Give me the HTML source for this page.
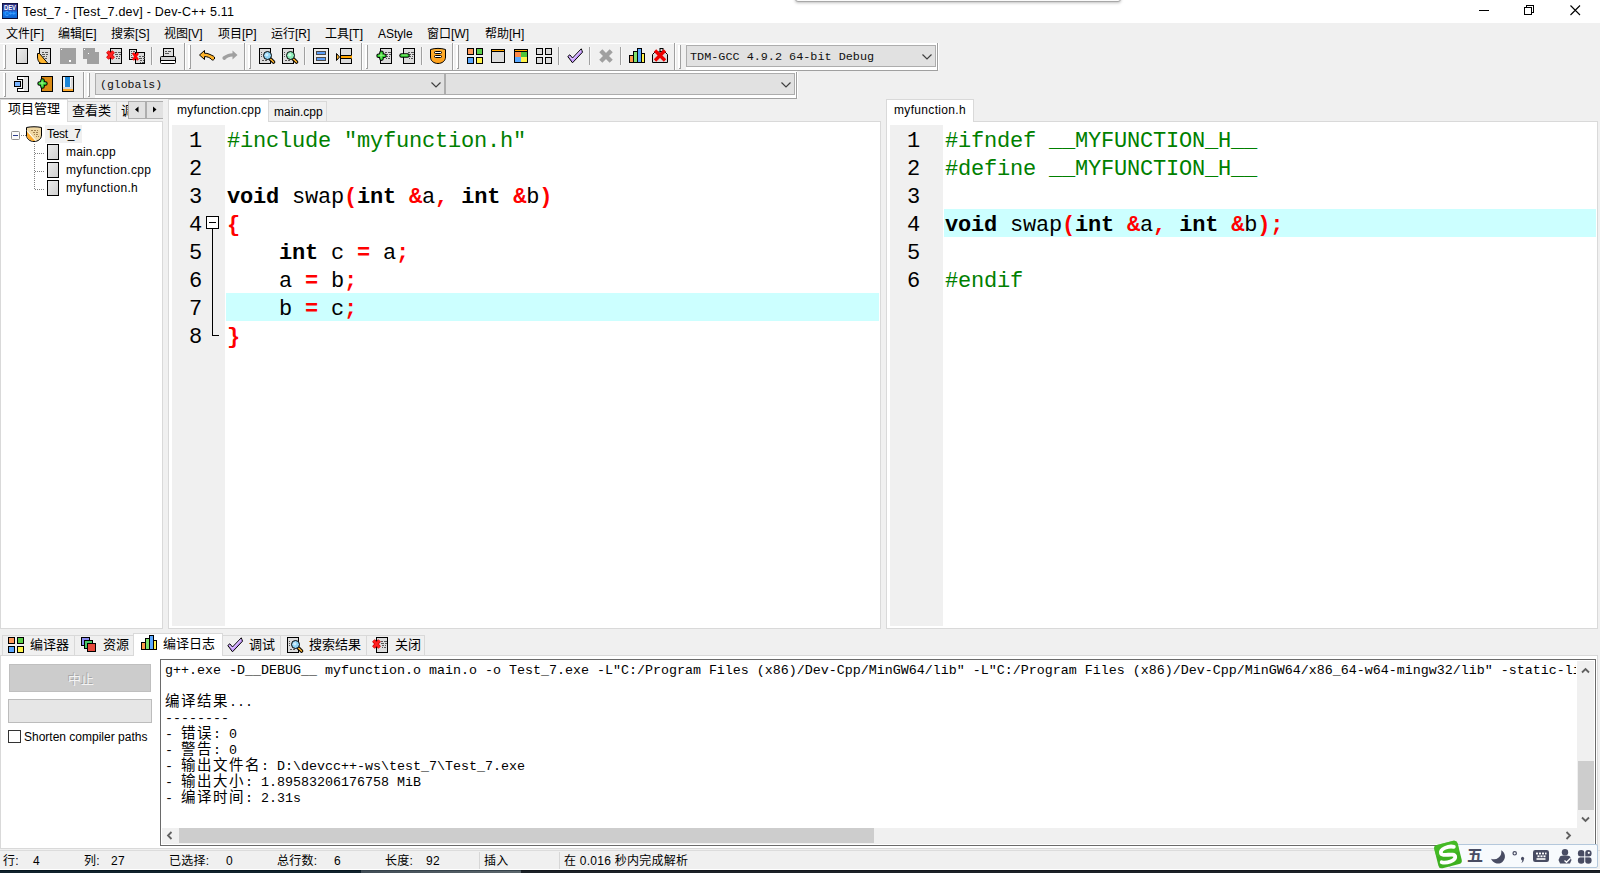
<!DOCTYPE html>
<html lang="zh-CN">
<head>
<meta charset="utf-8">
<title>Test_7 - [Test_7.dev] - Dev-C++ 5.11</title>
<style>
*{box-sizing:border-box;margin:0;padding:0}
html,body{width:1600px;height:873px;overflow:hidden;background:#f0f0f0}
body{position:relative;font-family:"Liberation Sans","Noto Sans CJK SC",sans-serif;font-size:12px;color:#000}
.a{position:absolute}
.t{position:absolute;white-space:pre;line-height:16px;height:16px;font-size:12px}
.m{font-family:"Liberation Mono","Noto Sans CJK SC",monospace}
svg{position:absolute;overflow:visible}
.band{position:absolute;border-right:1px solid #a0a0a0;border-bottom:1px solid #a0a0a0;border-top:1px solid #fff;border-left:1px solid #fff}
.grip{position:absolute;width:3px;border-left:2px solid #fff;border-right:1px solid #a0a0a0}
.grip:after{content:"";position:absolute;left:-1px;bottom:0;width:2px;height:1px;background:#a0a0a0}
.sep{position:absolute;width:2px;height:18px;border-left:1px solid #a0a0a0;border-right:1px solid #f8f8f8}
.combo{position:absolute;background:#e1e1e1;border:1px solid #adadad;height:22px}
.code{font-family:"Liberation Mono",monospace;font-size:22px;letter-spacing:-0.2px;line-height:28px;height:28px;white-space:pre;position:absolute}
.k{font-weight:bold}
.s{font-weight:bold;color:#f00}
.p{color:#008000}
.hl{position:absolute;background:#ccffff;height:28px}
.gut{position:absolute;background:#f0f0f0}
.tab{position:absolute;background:#f0f0f0;border:1px solid #d9d9d9;border-bottom:none}
.tabon{position:absolute;background:#fff;border:1px solid #d9d9d9;border-bottom:none}
.log{font-family:"Liberation Mono","Noto Sans CJK SC",monospace;font-size:13.33px;line-height:16px;height:16px;white-space:pre;position:absolute;color:#000}
.log i{font-style:normal;font-size:14.5px;letter-spacing:1.5px;display:inline-block;height:16px;line-height:16px;vertical-align:top;position:relative;top:-1px}
.st{position:absolute;white-space:pre;line-height:16px;height:16px;font-size:12px;top:853px;letter-spacing:.25px}
</style>
</head>
<body>
<div class="a" style="left:0;top:0;width:1600px;height:23px;background:#fff"></div>
<svg style="left:2px;top:3px" width="16" height="16" viewBox="0 0 16 16"><defs><linearGradient id="gapp" x1="0" y1="0" x2="0" y2="1"><stop offset="0" stop-color="#2b2a7a"/><stop offset=".5" stop-color="#2a52b8"/><stop offset=".62" stop-color="#0f7cf0"/><stop offset="1" stop-color="#1262d0"/></linearGradient></defs><rect x="0" y="0" width="16" height="16" fill="#0a0a30"/><rect x="0.700" y="0.700" width="14.300" height="14.300" fill="url(#gapp)"/><text x="8" y="7.300" text-anchor="middle" font-family="Liberation Sans,sans-serif" font-weight="bold" font-size="6.500" fill="#fff" textLength="12" lengthAdjust="spacingAndGlyphs">DEV</text><text x="8" y="13.300" text-anchor="middle" font-family="Liberation Sans,sans-serif" font-weight="bold" font-size="6.500" fill="#3f9cff" textLength="11" lengthAdjust="spacingAndGlyphs">C++</text></svg>
<span class="t" style="left:23px;top:4px;font-size:12.5px;letter-spacing:0.22px">Test_7 - [Test_7.dev] - Dev-C++ 5.11</span>
<svg style="left:1478px;top:4px" width="112" height="14" viewBox="0 0 112 14" fill="none" stroke="#000" stroke-width="1" shape-rendering="crispEdges"><path d="M1 6.5h10"/><path d="M46.5 3.5h7v7h-7z M48.5 3.5v-2h7v7h-2"/></svg>
<svg style="left:1570px;top:5px" width="11" height="11" viewBox="0 0 11 11" fill="none" stroke="#000" stroke-width="1.1"><path d="M0.5 0.5l9.5 9.5M10 0.5l-9.5 9.5"/></svg>
<div class="a" style="left:795px;top:-5px;width:326px;height:7px;background:#fafafa;border:1px solid #a8a8a8;border-radius:0 0 3px 3px;box-shadow:0 1px 3px rgba(0,0,0,.25)"></div>
<span class="t" style="left:6px;top:25.5px">文件[F]</span>
<span class="t" style="left:58px;top:25.5px">编辑[E]</span>
<span class="t" style="left:111px;top:25.5px">搜索[S]</span>
<span class="t" style="left:164px;top:25.5px">视图[V]</span>
<span class="t" style="left:218px;top:25.5px">项目[P]</span>
<span class="t" style="left:271px;top:25.5px">运行[R]</span>
<span class="t" style="left:325px;top:25.5px">工具[T]</span>
<span class="t" style="left:378px;top:25.5px">AStyle</span>
<span class="t" style="left:427px;top:25.5px">窗口[W]</span>
<span class="t" style="left:485px;top:25.5px">帮助[H]</span>
<div class="a" style="left:0;top:70px;width:938px;height:1px;background:#a0a0a0"></div>
<div class="a" style="left:0;top:43px;width:937px;height:1px;background:#fff"></div>
<div class="a" style="left:686px;top:43px;width:251px;height:27px;background:#fff"></div>
<div class="a" style="left:0;top:71px;width:797px;height:1px;background:#fff"></div>
<div class="a" style="left:184px;top:43px;width:1px;height:27px;background:#a0a0a0"></div>
<div class="a" style="left:185px;top:43px;width:1px;height:27px;background:#fff"></div>
<div class="grip" style="left:3px;top:45px;height:24px"></div>
<div class="a" style="left:244px;top:43px;width:1px;height:27px;background:#a0a0a0"></div>
<div class="a" style="left:245px;top:43px;width:1px;height:27px;background:#fff"></div>
<div class="grip" style="left:188px;top:45px;height:24px"></div>
<div class="a" style="left:361px;top:43px;width:1px;height:27px;background:#a0a0a0"></div>
<div class="a" style="left:362px;top:43px;width:1px;height:27px;background:#fff"></div>
<div class="grip" style="left:248px;top:45px;height:24px"></div>
<div class="a" style="left:452px;top:43px;width:1px;height:27px;background:#a0a0a0"></div>
<div class="a" style="left:453px;top:43px;width:1px;height:27px;background:#fff"></div>
<div class="grip" style="left:365px;top:45px;height:24px"></div>
<div class="a" style="left:674px;top:43px;width:1px;height:27px;background:#a0a0a0"></div>
<div class="a" style="left:675px;top:43px;width:1px;height:27px;background:#fff"></div>
<div class="grip" style="left:456px;top:45px;height:24px"></div>
<div class="a" style="left:937px;top:43px;width:1px;height:27px;background:#a0a0a0"></div>
<div class="a" style="left:938px;top:43px;width:1px;height:27px;background:#fff"></div>
<div class="grip" style="left:678px;top:45px;height:24px"></div>
<svg class="a" style="left:16px;top:48px" width="16" height="16" viewBox="0 0 16 16"><defs><linearGradient id="gpg" x1="0" y1="0" x2="1" y2="1"><stop offset="0" stop-color="#ececec"/><stop offset="1" stop-color="#cfcfcf"/></linearGradient></defs><rect x="0.5" y="0.5" width="11" height="15" fill="url(#gpg)" stroke="#000" shape-rendering="crispEdges"/></svg>
<svg class="a" style="left:37px;top:48px" width="16" height="16" viewBox="0 0 16 16"><rect x="2.5" y="0.5" width="11" height="15" fill="#dcdcdc" stroke="#000" shape-rendering="crispEdges"/><g fill="#555" shape-rendering="crispEdges"><rect x="5" y="4" width="2" height="1"/><rect x="8" y="4" width="3" height="1"/><rect x="5" y="6" width="3" height="1"/><rect x="9" y="6" width="2" height="1"/><rect x="6" y="8" width="2" height="1"/><rect x="9" y="8" width="1" height="1"/><rect x="6" y="10" width="1" height="1"/><rect x="8" y="10" width="2" height="1"/></g><path d="M0.5 5.5L2.5 5.5L11 15.5H5C2 15.5 0.5 12 0.5 9z" fill="#ffb52e" stroke="#000" stroke-width="1"/></svg>
<svg class="a" style="left:60px;top:48px" width="16" height="16" viewBox="0 0 16 16"><rect x="0" y="0" width="16" height="16" fill="#a0a0a0"/><rect x="1" y="1" width="1" height="1" fill="#fff"/><rect x="9" y="12" width="2" height="2" fill="#fff"/></svg>
<svg class="a" style="left:83px;top:48px" width="16" height="16" viewBox="0 0 16 16"><rect x="0" y="0" width="12" height="11" fill="#a0a0a0"/><rect x="4" y="4" width="12" height="12" fill="#a0a0a0"/><rect x="1" y="1" width="1" height="1" fill="#fff"/><rect x="5" y="5" width="1" height="1" fill="#fff"/></svg>
<svg class="a" style="left:106px;top:48px" width="16" height="16" viewBox="0 0 16 16"><rect x="4.5" y="0.5" width="11" height="15" fill="#dcdcdc" stroke="#000" shape-rendering="crispEdges"/><g fill="#555" shape-rendering="crispEdges"><rect x="9" y="4" width="2" height="1"/><rect x="12" y="4" width="3" height="1"/><rect x="9" y="6" width="3" height="1"/><rect x="13" y="6" width="2" height="1"/><rect x="10" y="8" width="2" height="1"/><rect x="13" y="8" width="1" height="1"/><rect x="10" y="10" width="1" height="1"/><rect x="12" y="10" width="2" height="1"/></g><path d="M1.500 3.500l6 7M7.500 3.500l-6 7" stroke="#c00000" stroke-width="3.600" fill="none"/><path d="M1.500 3.500l6 7M7.500 3.500l-6 7" stroke="#ff2020" stroke-width="2.400" fill="none"/></svg>
<svg class="a" style="left:129px;top:48px" width="16" height="16" viewBox="0 0 16 16"><rect x="0.5" y="1.5" width="7" height="10" fill="#dcdcdc" stroke="#000" shape-rendering="crispEdges"/><g fill="#555"><rect x="2" y="3" width="1" height="1"/><rect x="4" y="3" width="2" height="1"/><rect x="2" y="5" width="2" height="1"/><rect x="2" y="7" width="1" height="1"/><rect x="2" y="9" width="2" height="1"/></g><rect x="6.5" y="4.5" width="9" height="11" fill="#dcdcdc" stroke="#000" shape-rendering="crispEdges"/><g fill="#555" shape-rendering="crispEdges"><rect x="10" y="8" width="2" height="1"/><rect x="13" y="8" width="3" height="1"/><rect x="10" y="10" width="3" height="1"/><rect x="14" y="10" width="2" height="1"/><rect x="11" y="12" width="2" height="1"/><rect x="14" y="12" width="1" height="1"/><rect x="11" y="14" width="1" height="1"/><rect x="13" y="14" width="2" height="1"/></g><path d="M4 5l5 7M9 5l-5 7" stroke="#f00" stroke-width="2.400" fill="none"/></svg>
<div class="sep" style="left:151px;top:47px"></div>
<svg class="a" style="left:160px;top:48px" width="16" height="16" viewBox="0 0 16 16"><rect x="3.5" y="0.5" width="10" height="8" fill="#dcdcdc" stroke="#000" shape-rendering="crispEdges"/><rect x="5" y="3" width="2" height="1" fill="#555"/><rect x="8" y="3" width="3" height="1" fill="#555"/><rect x="5" y="5" width="4" height="1" fill="#555"/><rect x="0.5" y="8.5" width="15" height="7" rx="1" fill="#fff" stroke="#000"/><rect x="1" y="9" width="14" height="3" fill="#d0d0d0"/><rect x="1" y="12" width="14" height="1" fill="#000"/></svg>
<svg class="a" style="left:199px;top:48px" width="16" height="16" viewBox="0 0 16 16"><path d="M0.500 7L5.500 2.500V5.200C9 5.200 11 6.500 14.500 8.200C16 9 16 11 14.500 11.800C13.500 12.300 12.500 12 12.200 11C10.500 9.500 8.500 8.600 5.500 8.600V11.500z" fill="#ffb52e" stroke="#000" stroke-width="1" stroke-linejoin="round"/></svg>
<svg class="a" style="left:222px;top:48px" width="16" height="16" viewBox="0 0 16 16"><path d="M15.500 7L10.500 2.500V5.200C7 5.200 5 6.500 1.500 8.200C0 9 0 11 1.500 11.800C2.500 12.300 3.500 12 3.800 11C5.500 9.500 7.500 8.600 10.500 8.600V11.500z" fill="#a0a0a0"/></svg>
<svg class="a" style="left:259px;top:48px" width="16" height="16" viewBox="0 0 16 16"><rect x="0.5" y="0.5" width="11" height="15" fill="#dcdcdc" stroke="#000" shape-rendering="crispEdges"/><g fill="#555" shape-rendering="crispEdges"><rect x="2" y="4" width="1" height="1"/><rect x="2" y="6" width="1" height="1"/><rect x="2" y="8" width="1" height="1"/><rect x="3" y="12" width="2" height="1"/><rect x="6" y="12" width="2" height="1"/></g><path d="M11.500 11l3 3" stroke="#000" stroke-width="3.600" stroke-linecap="round"/><path d="M11.500 11l3 3" stroke="#ffb52e" stroke-width="1.600" stroke-linecap="round"/><circle cx="8.500" cy="7.500" r="4" fill="#8fd4f5" stroke="#000" stroke-width="1"/><circle cx="7.800" cy="6.800" r="1.600" fill="#fff" opacity=".6"/></svg>
<svg class="a" style="left:282px;top:48px" width="16" height="16" viewBox="0 0 16 16"><rect x="0.5" y="0.5" width="11" height="15" fill="#dcdcdc" stroke="#000" shape-rendering="crispEdges"/><g fill="#555" shape-rendering="crispEdges"><rect x="2" y="4" width="1" height="1"/><rect x="2" y="6" width="1" height="1"/><rect x="2" y="8" width="1" height="1"/><rect x="3" y="12" width="2" height="1"/><rect x="6" y="12" width="2" height="1"/></g><path d="M11.500 11l3 3" stroke="#000" stroke-width="3.600" stroke-linecap="round"/><path d="M11.500 11l3 3" stroke="#ffb52e" stroke-width="1.600" stroke-linecap="round"/><circle cx="8.500" cy="7.500" r="4" fill="#8cecb8" stroke="#000" stroke-width="1"/><circle cx="7.800" cy="6.800" r="1.600" fill="#fff" opacity=".6"/></svg>
<div class="sep" style="left:304px;top:47px"></div>
<svg class="a" style="left:313px;top:48px" width="16" height="16" viewBox="0 0 16 16"><rect x="0.5" y="0.5" width="15" height="15" fill="#ececec" stroke="#000" shape-rendering="crispEdges"/><rect x="3.5" y="3.5" width="9" height="3" fill="#5a9cf5" stroke="#4a4a4a" shape-rendering="crispEdges"/><rect x="3.5" y="9.5" width="9" height="3" fill="#5a9cf5" stroke="#4a4a4a" shape-rendering="crispEdges"/></svg>
<svg class="a" style="left:336px;top:48px" width="16" height="16" viewBox="0 0 16 16"><rect x="4.5" y="0.5" width="11" height="15" fill="#dcdcdc" stroke="#000" shape-rendering="crispEdges"/><rect x="5" y="7.5" width="11" height="3" fill="#ffa500" stroke="#000" stroke-width="0" /><rect x="5" y="7" width="10" height="1" fill="#000"/><rect x="5" y="10" width="10" height="1" fill="#000"/><rect x="5" y="8" width="10" height="2" fill="#ffa500"/><path d="M0.5 5.5l3 3.5l-3 3.5z" fill="#ffb52e" stroke="#000" stroke-width="1"/></svg>
<svg class="a" style="left:376px;top:48px" width="16" height="16" viewBox="0 0 16 16"><rect x="4.5" y="0.5" width="11" height="15" fill="#dcdcdc" stroke="#000" shape-rendering="crispEdges"/><g fill="#555" shape-rendering="crispEdges"><rect x="9" y="4" width="2" height="1"/><rect x="12" y="4" width="3" height="1"/><rect x="9" y="6" width="3" height="1"/><rect x="13" y="6" width="2" height="1"/><rect x="10" y="8" width="2" height="1"/><rect x="13" y="8" width="1" height="1"/><rect x="10" y="10" width="1" height="1"/><rect x="12" y="10" width="2" height="1"/></g><path d="M2.600 7.700h5.800M5.500 4.800v5.800" stroke="#000" stroke-width="4.600" stroke-linecap="round"/><path d="M2.600 7.700h5.800M5.500 4.800v5.800" stroke="#2fd42f" stroke-width="2.600" stroke-linecap="round"/><path d="M3 7.200h5M5 5.500v4.500" stroke="#b6ff9c" stroke-width="0.800" stroke-linecap="round"/></svg>
<svg class="a" style="left:399px;top:48px" width="16" height="16" viewBox="0 0 16 16"><rect x="4.5" y="0.5" width="11" height="15" fill="#dcdcdc" stroke="#000" shape-rendering="crispEdges"/><g fill="#555" shape-rendering="crispEdges"><rect x="9" y="4" width="2" height="1"/><rect x="12" y="4" width="3" height="1"/><rect x="9" y="6" width="3" height="1"/><rect x="13" y="6" width="2" height="1"/><rect x="10" y="8" width="2" height="1"/><rect x="13" y="8" width="1" height="1"/><rect x="10" y="10" width="1" height="1"/><rect x="12" y="10" width="2" height="1"/></g><path d="M2.600 7.500h5.800" stroke="#000" stroke-width="4.600" stroke-linecap="round"/><path d="M2.600 7.500h5.800" stroke="#2fd42f" stroke-width="2.600" stroke-linecap="round"/><path d="M3 7h5" stroke="#b6ff9c" stroke-width="0.800" stroke-linecap="round"/></svg>
<div class="sep" style="left:421px;top:47px"></div>
<svg class="a" style="left:430px;top:48px" width="16" height="16" viewBox="0 0 16 16"><defs><linearGradient id="gor" x1="0" y1="0" x2="0" y2="1"><stop offset="0" stop-color="#ffb030"/><stop offset="1" stop-color="#ffa01a"/></linearGradient></defs><path d="M0.5 1.5C5 0 11 0 15.5 1.5V9C15.5 13 12 15.5 8 15.5C4 15.5 0.5 13 0.5 9z" fill="url(#gor)" stroke="#000" stroke-width="1"/><rect x="4.5" y="3.5" width="7" height="2" rx="1" fill="#fff" stroke="#000" stroke-width="1"/><rect x="4.5" y="7.5" width="7" height="2" rx="1" fill="#fff" stroke="#000" stroke-width="1"/></svg>
<svg class="a" style="left:467px;top:48px" width="16" height="16" viewBox="0 0 16 16"><rect x="0.5" y="0.5" width="6" height="6" fill="#ff9a5a" stroke="#000" shape-rendering="crispEdges"/><rect x="9.5" y="0.5" width="6" height="6" fill="#5ccf4a" stroke="#000" shape-rendering="crispEdges"/><rect x="0.5" y="9.5" width="6" height="6" fill="#5aa8ff" stroke="#000" shape-rendering="crispEdges"/><rect x="9.5" y="9.5" width="6" height="6" fill="#fff34a" stroke="#000" shape-rendering="crispEdges"/></svg>
<svg class="a" style="left:490px;top:48px" width="16" height="16" viewBox="0 0 16 16"><rect x="1.5" y="1.5" width="13" height="13" fill="#dcdcdc" stroke="#000" shape-rendering="crispEdges"/><rect x="2" y="2" width="12" height="1" fill="#ffa500"/><rect x="2" y="3" width="12" height="1" fill="#000"/></svg>
<svg class="a" style="left:513px;top:48px" width="16" height="16" viewBox="0 0 16 16"><rect x="1.5" y="1.5" width="13" height="13" fill="#dcdcdc" stroke="#000" shape-rendering="crispEdges"/><rect x="2" y="2" width="12" height="1" fill="#ffa500"/><rect x="2" y="3" width="12" height="1" fill="#000"/><rect x="2" y="4" width="6" height="5" fill="#ff8a4a"/><rect x="8" y="4" width="6" height="5" fill="#4cc43a"/><rect x="2" y="9" width="6" height="5" fill="#5aa8ff"/><rect x="8" y="9" width="6" height="5" fill="#fff34a"/></svg>
<svg class="a" style="left:536px;top:48px" width="16" height="16" viewBox="0 0 16 16"><rect x="0.5" y="0.5" width="6" height="6" fill="#dcdcdc" stroke="#000" shape-rendering="crispEdges"/><rect x="9.5" y="0.5" width="6" height="6" fill="#dcdcdc" stroke="#000" shape-rendering="crispEdges"/><rect x="0.5" y="9.5" width="6" height="6" fill="#dcdcdc" stroke="#000" shape-rendering="crispEdges"/><rect x="9.5" y="9.5" width="6" height="6" fill="#dcdcdc" stroke="#000" shape-rendering="crispEdges"/></svg>
<div class="sep" style="left:558px;top:47px"></div>
<svg class="a" style="left:567px;top:48px" width="16" height="16" viewBox="0 0 16 16"><path d="M0.800 8.500L2.800 6.800L5.500 10L14.300 0.800L15.500 4.200L5.500 14.800z" fill="#c79bff" stroke="#000" stroke-width="1" stroke-linejoin="round"/><path d="M2.500 8.300L5.500 11.500L14 2.500" stroke="#e6d2ff" stroke-width="1" fill="none"/></svg>
<div class="sep" style="left:589px;top:47px"></div>
<svg class="a" style="left:598px;top:48px" width="16" height="16" viewBox="0 0 16 16"><path d="M2.800 3.800l10.400 10.400M13.200 3.800L2.800 14.200" stroke="#a0a0a0" stroke-width="4.400" fill="none" transform="translate(0 -1)"/></svg>
<div class="sep" style="left:620px;top:47px"></div>
<svg class="a" style="left:629px;top:48px" width="16" height="16" viewBox="0 0 16 16"><g stroke="#000" shape-rendering="crispEdges"><rect x="0.5" y="7.5" width="4" height="7" fill="#ff9a4a"/><rect x="4.5" y="3.5" width="4" height="11" fill="#7fe06a"/><rect x="8.5" y="0.5" width="4" height="14" fill="#5aa8ff"/><rect x="12.5" y="5.5" width="3" height="9" fill="#fff34a"/></g><rect x="0" y="14" width="16" height="1" fill="#000"/></svg>
<svg class="a" style="left:652px;top:48px" width="16" height="16" viewBox="0 0 16 16"><path d="M0.5 6.5L3 4h10l2.5 2.5v8h-15z" fill="#dcdcdc" stroke="#000" stroke-width="1"/><rect x="8" y="0.500" width="3" height="3" fill="#dcdcdc" stroke="#000"/><path d="M3 2.5l10 10M13 2.5l-10 10" stroke="#e00" stroke-width="3.4" fill="none"/></svg>
<div class="combo" style="left:686px;top:45px;width:250px"></div>
<span class="t m" style="left:690px;top:49px;font-size:11.8px;color:#111">TDM-GCC 4.9.2 64-bit Debug</span>
<svg style="left:922px;top:54px" width="10" height="6" viewBox="0 0 10 6" fill="none" stroke="#404040" stroke-width="1.2"><path d="M0.5 0.5l4.5 4.5l4.5-4.5"/></svg>
<div class="a" style="left:0;top:98px;width:797px;height:1px;background:#a0a0a0"></div>
<div class="a" style="left:83px;top:72px;width:1px;height:26px;background:#a0a0a0"></div>
<div class="a" style="left:84px;top:72px;width:1px;height:26px;background:#fff"></div>
<div class="grip" style="left:3px;top:73px;height:24px"></div>
<div class="a" style="left:796px;top:72px;width:1px;height:26px;background:#a0a0a0"></div>
<div class="a" style="left:797px;top:72px;width:1px;height:26px;background:#fff"></div>
<div class="grip" style="left:87px;top:73px;height:24px"></div>
<svg class="a" style="left:14px;top:76px" width="16" height="16" viewBox="0 0 16 16"><path d="M3.500 0.500H14.500V15.500H3.500V12.500H8.500V3.500H3.500z" fill="#e4e4e4" stroke="#000" stroke-width="1" shape-rendering="crispEdges"/><rect x="4" y="1" width="6" height="2" fill="#fff"/><rect x="4" y="13" width="6" height="2" fill="#fff"/><rect x="0.500" y="5.500" width="6" height="5" fill="#7ab4ff" stroke="#000" shape-rendering="crispEdges"/></svg>
<svg class="a" style="left:37px;top:76px" width="16" height="16" viewBox="0 0 16 16"><rect x="4.500" y="0.500" width="11" height="15" fill="#d98a14" stroke="#000" shape-rendering="crispEdges"/><path d="M2.600 7.500h5.800M5.500 4.600v5.800" stroke="#000" stroke-width="4.600" stroke-linecap="round"/><path d="M2.600 7.500h5.800M5.500 4.600v5.800" stroke="#2fd42f" stroke-width="2.600" stroke-linecap="round"/><path d="M3 7h5M5 5.300v4.500" stroke="#b6ff9c" stroke-width="0.800" stroke-linecap="round"/></svg>
<svg class="a" style="left:60px;top:76px" width="16" height="16" viewBox="0 0 16 16"><rect x="2.500" y="0.500" width="11" height="15" fill="#f4f4f4" stroke="#000" shape-rendering="crispEdges"/><rect x="3" y="13" width="10" height="2" fill="#ffa826"/><rect x="3" y="11" width="10" height="2" fill="#d8d8d8"/><rect x="11" y="2" width="2" height="10" fill="#d8d8d8"/><rect x="5" y="1" width="5" height="10" fill="#1c86d8"/></svg>
<div class="a" style="left:95px;top:71px;width:701px;height:27px;background:#fff"></div>
<div class="combo" style="left:95px;top:73px;width:350px"></div>
<div class="combo" style="left:445px;top:73px;width:350px"></div>
<span class="t m" style="left:100px;top:77px;font-size:11.5px;color:#111">(globals)</span>
<svg style="left:431px;top:82px" width="10" height="6" viewBox="0 0 10 6" fill="none" stroke="#404040" stroke-width="1.2"><path d="M0.5 0.5l4.5 4.5l4.5-4.5"/></svg>
<svg style="left:781px;top:82px" width="10" height="6" viewBox="0 0 10 6" fill="none" stroke="#404040" stroke-width="1.2"><path d="M0.5 0.5l4.5 4.5l4.5-4.5"/></svg>
<div class="a" style="left:0;top:121px;width:163px;height:508px;background:#fff;border:1px solid #d9d9d9"></div>
<div class="tabon" style="left:0;top:99px;width:68px;height:23px"></div>
<div class="tab" style="left:67px;top:101px;width:50px;height:20px"></div>
<div class="tab" style="left:116px;top:101px;width:20px;height:20px;border-right:none"></div>
<span class="t" style="left:8px;top:101px;font-size:13px">项目管理</span>
<span class="t" style="left:72px;top:103px;font-size:13px">查看类</span>
<span class="t" style="left:121px;top:103px;font-size:13px;width:7px;overflow:hidden">调试</span>
<div class="a" style="left:128px;top:101px;width:18px;height:18px;background:#e1e1e1;border:1px solid #adadad"></div>
<svg style="left:128px;top:101px" width="18" height="18" viewBox="0 0 18 18"><path d="M10.5 5.5v6l-3.5-3z" fill="#000"/></svg>
<div class="a" style="left:146px;top:101px;width:18px;height:18px;background:#e1e1e1;border:1px solid #adadad"></div>
<svg style="left:146px;top:101px" width="18" height="18" viewBox="0 0 18 18"><path d="M7 5.5v6l3.5-3z" fill="#000"/></svg>
<div class="a" style="left:45px;top:125px;width:37px;height:18px;background:#f0f0f0"></div>
<svg style="left:0px;top:122px" width="163" height="80" viewBox="0 0 163 80" shape-rendering="crispEdges"><g stroke="#808080" stroke-dasharray="1 1" fill="none"><path d="M21 13.5h6 M34.5 22v46 M35 31.5h10 M35 49.5h10 M35 67.5h10"/></g><rect x="11.5" y="9.5" width="8" height="8" rx="1" fill="#fbfbfb" stroke="#919191" shape-rendering="auto"/><path d="M13 13.5h5" stroke="#2b3c8c"/></svg>
<svg class="a" style="left:26px;top:126px" width="16" height="16" viewBox="0 0 16 16"><path d="M0.500 1.500C5 0.500 11 0.500 15.500 1.500V9C15.500 13 12 15.500 8 15.500C4 15.500 0.500 13 0.500 9z" fill="#f0d8a4" stroke="#000" stroke-width="1"/><path d="M1 6L9 15C4 15 1 12.500 1 9z" fill="#ffa826"/><path d="M1 4.500L10 14.800" stroke="#fff" stroke-width="1" fill="none"/><g fill="#a08050"><rect x="5" y="4" width="2" height="1"/><rect x="8" y="4" width="2" height="1"/><rect x="11" y="4" width="1" height="1"/><rect x="7" y="6" width="2" height="1"/><rect x="10" y="6" width="2" height="1"/><rect x="8" y="8" width="1" height="1"/><rect x="10" y="8" width="2" height="1"/><rect x="10" y="10" width="1" height="1"/><rect x="12" y="10" width="1" height="1"/></g></svg>
<svg class="a" style="left:47px;top:144px" width="16" height="16" viewBox="0 0 16 16"><defs><linearGradient id="gpg" x1="0" y1="0" x2="1" y2="1"><stop offset="0" stop-color="#ececec"/><stop offset="1" stop-color="#cfcfcf"/></linearGradient></defs><rect x="0.5" y="0.5" width="11" height="15" fill="url(#gpg)" stroke="#000" shape-rendering="crispEdges"/></svg>
<span class="t" style="left:66px;top:144px;letter-spacing:0.13px">main.cpp</span>
<svg class="a" style="left:47px;top:162px" width="16" height="16" viewBox="0 0 16 16"><defs><linearGradient id="gpg" x1="0" y1="0" x2="1" y2="1"><stop offset="0" stop-color="#ececec"/><stop offset="1" stop-color="#cfcfcf"/></linearGradient></defs><rect x="0.5" y="0.5" width="11" height="15" fill="url(#gpg)" stroke="#000" shape-rendering="crispEdges"/></svg>
<span class="t" style="left:66px;top:162px;letter-spacing:0.33px">myfunction.cpp</span>
<svg class="a" style="left:47px;top:180px" width="16" height="16" viewBox="0 0 16 16"><defs><linearGradient id="gpg" x1="0" y1="0" x2="1" y2="1"><stop offset="0" stop-color="#ececec"/><stop offset="1" stop-color="#cfcfcf"/></linearGradient></defs><rect x="0.5" y="0.5" width="11" height="15" fill="url(#gpg)" stroke="#000" shape-rendering="crispEdges"/></svg>
<span class="t" style="left:66px;top:180px;letter-spacing:0.34px">myfunction.h</span>
<span class="t" style="left:47px;top:126px;letter-spacing:-0.3px">Test_7</span>
<div class="a" style="left:163px;top:99px;width:5px;height:530px;background:#f0f0f0"></div>
<div class="a" style="left:168px;top:121px;width:713px;height:508px;background:#fff;border:1px solid #d9d9d9"></div>
<div class="tabon" style="left:168px;top:99px;width:101px;height:23px"></div>
<div class="tab" style="left:268px;top:101px;width:59px;height:20px"></div>
<span class="t" style="left:177px;top:102px;letter-spacing:0.24px">myfunction.cpp</span>
<span class="t" style="left:274px;top:104px">main.cpp</span>
<div class="gut" style="left:172px;top:125px;width:53px;height:501px"></div>
<div class="hl" style="left:226px;top:293px;width:653px"></div>
<div class="code" style="left:189px;top:128px">1</div>
<div class="code" style="left:227px;top:128px"><span class="p">#include "myfunction.h"</span></div>
<div class="code" style="left:189px;top:156px">2</div>
<div class="code" style="left:189px;top:184px">3</div>
<div class="code" style="left:227px;top:184px"><span class="k">void</span> swap<span class="s">(</span><span class="k">int</span> <span class="s">&amp;</span>a<span class="s">,</span> <span class="k">int</span> <span class="s">&amp;</span>b<span class="s">)</span></div>
<div class="code" style="left:189px;top:212px">4</div>
<div class="code" style="left:227px;top:212px"><span class="s">{</span></div>
<div class="code" style="left:189px;top:240px">5</div>
<div class="code" style="left:227px;top:240px">    <span class="k">int</span> c <span class="s">=</span> a<span class="s">;</span></div>
<div class="code" style="left:189px;top:268px">6</div>
<div class="code" style="left:227px;top:268px">    a <span class="s">=</span> b<span class="s">;</span></div>
<div class="code" style="left:189px;top:296px">7</div>
<div class="code" style="left:227px;top:296px">    b <span class="s">=</span> c<span class="s">;</span></div>
<div class="code" style="left:189px;top:324px">8</div>
<div class="code" style="left:227px;top:324px"><span class="s">}</span></div>
<svg style="left:205px;top:209px" width="16" height="130" viewBox="0 0 16 130" shape-rendering="crispEdges" fill="none" stroke="#000"><rect x="1.5" y="7.5" width="12" height="12" fill="#fff"/><path d="M4 13.5h7 M7.5 20v106.5h6"/></svg>
<div class="a" style="left:886px;top:121px;width:712px;height:508px;background:#fff;border:1px solid #d9d9d9"></div>
<div class="tabon" style="left:886px;top:99px;width:88px;height:23px"></div>
<span class="t" style="left:894px;top:102px;letter-spacing:0.33px">myfunction.h</span>
<div class="gut" style="left:890px;top:125px;width:53px;height:501px"></div>
<div class="hl" style="left:944px;top:209px;width:652px"></div>
<div class="code" style="left:907px;top:128px">1</div>
<div class="code" style="left:945px;top:128px"><span class="p">#ifndef __MYFUNCTION_H__</span></div>
<div class="code" style="left:907px;top:156px">2</div>
<div class="code" style="left:945px;top:156px"><span class="p">#define __MYFUNCTION_H__</span></div>
<div class="code" style="left:907px;top:184px">3</div>
<div class="code" style="left:907px;top:212px">4</div>
<div class="code" style="left:945px;top:212px"><span class="k">void</span> swap<span class="s">(</span><span class="k">int</span> <span class="s">&amp;</span>a<span class="s">,</span> <span class="k">int</span> <span class="s">&amp;</span>b<span class="s">);</span></div>
<div class="code" style="left:907px;top:240px">5</div>
<div class="code" style="left:907px;top:268px">6</div>
<div class="code" style="left:945px;top:268px"><span class="p">#endif</span></div>
<div class="a" style="left:0;top:655px;width:1598px;height:194px;background:#fff;border:1px solid #d9d9d9"></div>
<div class="tab" style="left:2px;top:635px;width:74px;height:20px"></div>
<svg class="a" style="left:8px;top:637px" width="16" height="16" viewBox="0 0 16 16"><rect x="0.5" y="0.5" width="6" height="6" fill="#ff9a5a" stroke="#000" shape-rendering="crispEdges"/><rect x="9.5" y="0.5" width="6" height="6" fill="#5ccf4a" stroke="#000" shape-rendering="crispEdges"/><rect x="0.5" y="9.5" width="6" height="6" fill="#5aa8ff" stroke="#000" shape-rendering="crispEdges"/><rect x="9.5" y="9.5" width="6" height="6" fill="#fff34a" stroke="#000" shape-rendering="crispEdges"/></svg>
<span class="t" style="left:30px;top:637px;font-size:13px">编译器</span>
<div class="tab" style="left:74px;top:635px;width:62px;height:20px"></div>
<svg class="a" style="left:81px;top:637px" width="16" height="16" viewBox="0 0 16 16"><rect x="0.500" y="0.500" width="8" height="8" fill="#8a8cf0" stroke="#000" shape-rendering="crispEdges"/><rect x="3.500" y="3.500" width="8" height="8" fill="#4cc86a" stroke="#000" shape-rendering="crispEdges"/><rect x="6.500" y="6.500" width="8" height="8" fill="#e64a3c" stroke="#000" shape-rendering="crispEdges"/></svg>
<span class="t" style="left:103px;top:637px;font-size:13px">资源</span>
<div class="tabon" style="left:133px;top:633px;width:90px;height:23px"></div>
<svg class="a" style="left:141px;top:635px" width="16" height="16" viewBox="0 0 16 16"><g stroke="#000" shape-rendering="crispEdges"><rect x="0.5" y="7.5" width="4" height="7" fill="#ff9a4a"/><rect x="4.5" y="3.5" width="4" height="11" fill="#7fe06a"/><rect x="8.5" y="0.5" width="4" height="14" fill="#5aa8ff"/><rect x="12.5" y="5.5" width="3" height="9" fill="#fff34a"/></g><rect x="0" y="14" width="16" height="1" fill="#000"/></svg>
<span class="t" style="left:163px;top:635.5px;font-size:13px">编译日志</span>
<div class="tab" style="left:222px;top:635px;width:60px;height:20px"></div>
<svg class="a" style="left:227px;top:637px" width="16" height="16" viewBox="0 0 16 16"><path d="M0.800 8.500L2.800 6.800L5.500 10L14.300 0.800L15.500 4.200L5.500 14.800z" fill="#c79bff" stroke="#000" stroke-width="1" stroke-linejoin="round"/><path d="M2.500 8.300L5.500 11.500L14 2.500" stroke="#e6d2ff" stroke-width="1" fill="none"/></svg>
<span class="t" style="left:249px;top:637px;font-size:13px">调试</span>
<div class="tab" style="left:280px;top:635px;width:88px;height:20px"></div>
<svg class="a" style="left:287px;top:637px" width="16" height="16" viewBox="0 0 16 16"><rect x="0.5" y="0.5" width="11" height="15" fill="#dcdcdc" stroke="#000" shape-rendering="crispEdges"/><g fill="#555" shape-rendering="crispEdges"><rect x="2" y="4" width="1" height="1"/><rect x="2" y="6" width="1" height="1"/><rect x="2" y="8" width="1" height="1"/><rect x="3" y="12" width="2" height="1"/><rect x="6" y="12" width="2" height="1"/></g><path d="M11.500 11l3 3" stroke="#000" stroke-width="3.600" stroke-linecap="round"/><path d="M11.500 11l3 3" stroke="#ffb52e" stroke-width="1.600" stroke-linecap="round"/><circle cx="8.500" cy="7.500" r="4" fill="#8fd4f5" stroke="#000" stroke-width="1"/><circle cx="7.800" cy="6.800" r="1.600" fill="#fff" opacity=".6"/></svg>
<span class="t" style="left:309px;top:637px;font-size:13px">搜索结果</span>
<div class="tab" style="left:366px;top:635px;width:59px;height:20px"></div>
<svg class="a" style="left:372px;top:637px" width="16" height="16" viewBox="0 0 16 16"><rect x="4.5" y="0.5" width="11" height="15" fill="#dcdcdc" stroke="#000" shape-rendering="crispEdges"/><g fill="#555" shape-rendering="crispEdges"><rect x="9" y="4" width="2" height="1"/><rect x="12" y="4" width="3" height="1"/><rect x="9" y="6" width="3" height="1"/><rect x="13" y="6" width="2" height="1"/><rect x="10" y="8" width="2" height="1"/><rect x="13" y="8" width="1" height="1"/><rect x="10" y="10" width="1" height="1"/><rect x="12" y="10" width="2" height="1"/></g><path d="M1.500 3.500l6 7M7.500 3.500l-6 7" stroke="#c00000" stroke-width="3.600" fill="none"/><path d="M1.500 3.500l6 7M7.500 3.500l-6 7" stroke="#ff2020" stroke-width="2.400" fill="none"/></svg>
<span class="t" style="left:395px;top:637px;font-size:13px">关闭</span>
<div class="a" style="left:9px;top:664px;width:142px;height:28px;background:#cccccc;border:1px solid #bfbfbf"></div>
<span class="t" style="left:68px;top:671.5px;font-size:13px;color:#f4f4f4;text-shadow:-1px -1px 0 #a8a8a8">中止</span>
<div class="a" style="left:8px;top:699px;width:144px;height:24px;background:#e6e6e6;border:1px solid #bcbcbc"></div>
<div class="a" style="left:8px;top:730px;width:13px;height:13px;background:#fff;border:1px solid #333"></div>
<span class="t" style="left:24px;top:729px">Shorten compiler paths</span>
<div class="a" style="left:160px;top:659px;width:1436px;height:187px;background:#fff;border:1px solid #6a6a6a"></div>
<div class="a" style="left:162px;top:661px;width:1414px;height:167px;overflow:hidden">
<div class="log" style="left:3px;top:2px">g++.exe -D__DEBUG__ myfunction.o main.o -o Test_7.exe -L"C:/Program Files (x86)/Dev-Cpp/MinGW64/lib" -L"C:/Program Files (x86)/Dev-Cpp/MinGW64/x86_64-w64-mingw32/lib" -static-libgcc</div>
<div class="log" style="left:3px;top:34px"><i>编译结果</i>...</div>
<div class="log" style="left:3px;top:50px">--------</div>
<div class="log" style="left:3px;top:66px">- <i>错误</i>: 0</div>
<div class="log" style="left:3px;top:82px">- <i>警告</i>: 0</div>
<div class="log" style="left:3px;top:98px">- <i>输出文件名</i>: D:\devcc++-ws\test_7\Test_7.exe</div>
<div class="log" style="left:3px;top:114px">- <i>输出大小</i>: 1.89583206176758 MiB</div>
<div class="log" style="left:3px;top:130px">- <i>编译时间</i>: 2.31s</div>
</div>
<div class="a" style="left:1577px;top:661px;width:17px;height:167px;background:#f0f0f0"></div>
<div class="a" style="left:1578px;top:761px;width:16px;height:49px;background:#cdcdcd"></div>
<div class="a" style="left:162px;top:828px;width:1432px;height:16px;background:#f0f0f0"></div>
<div class="a" style="left:179px;top:828px;width:695px;height:15px;background:#cdcdcd"></div>
<svg style="left:1581px;top:666px" width="9" height="9" viewBox="0 0 9 9" fill="none" stroke="#606060" stroke-width="1.8"><path d="M1 6.5l3.5-3.5l3.5 3.5"/></svg>
<svg style="left:1581px;top:815px" width="9" height="9" viewBox="0 0 9 9" fill="none" stroke="#606060" stroke-width="1.8"><path d="M1 2.5l3.5 3.5l3.5-3.5"/></svg>
<svg style="left:165px;top:831px" width="9" height="9" viewBox="0 0 9 9" fill="none" stroke="#606060" stroke-width="1.8"><path d="M6.5 1l-3.5 3.5l3.500 3.500"/></svg>
<svg style="left:1564px;top:831px" width="9" height="9" viewBox="0 0 9 9" fill="none" stroke="#606060" stroke-width="1.8"><path d="M2.5 1l3.5 3.5l-3.500 3.500"/></svg>
<div class="a" style="left:0;top:850px;width:1600px;height:1px;background:#dcdcdc"></div>
<span class="st" style="left:3px">行:</span>
<span class="st" style="left:33px">4</span>
<span class="st" style="left:84px">列:</span>
<span class="st" style="left:111px">27</span>
<span class="st" style="left:169px">已选择:</span>
<span class="st" style="left:226px">0</span>
<span class="st" style="left:277px">总行数:</span>
<span class="st" style="left:334px">6</span>
<span class="st" style="left:385px">长度:</span>
<span class="st" style="left:426px">92</span>
<span class="st" style="left:484px">插入</span>
<span class="st" style="left:564px">在 0.016 秒内完成解析</span>
<div class="a" style="left:479px;top:852px;width:1px;height:17px;background:#d7d7d7"></div>
<div class="a" style="left:559px;top:852px;width:1px;height:17px;background:#d7d7d7"></div>
<div class="a" style="left:1449px;top:844px;width:149px;height:24px;background:#f7fafd;border:1px solid #b4c8dc;border-radius:2px"></div>
<svg style="left:1434px;top:839px" width="166" height="32" viewBox="0 0 166 32"><g transform="rotate(-14 14 15.500)"><rect x="2" y="3.500" width="24" height="24" rx="3.500" fill="#3db020"/><rect x="2" y="3.500" width="24" height="12" rx="3.500" fill="#49c22a" opacity=".6"/><path d="M21.500 9.500C17 7 7.500 8 7.500 12.500C7.500 17 20.500 14.500 20.500 19C20.500 23.500 10 24 6 21.500" stroke="#fff" stroke-width="3.800" fill="none" stroke-linecap="round"/></g><path d="M67.200 11.200A7.100 7.100 0 1 1 57.100 19.700A7.500 7.500 0 0 0 67.200 11.200z" fill="#484c63"/><circle cx="80.700" cy="14.300" r="1.700" fill="none" stroke="#484c63" stroke-width="1.200"/><path d="M87 19.500a1.600 1.600 0 1 1 2.800 1c0 1.800-1 3-2.600 3.600c0.800-0.800 1.200-1.600 1.200-2.600c-0.900-0.200-1.400-1-1.400-2z" fill="#484c63"/><rect x="99.800" y="11.800" width="14.400" height="10.400" rx="1.500" fill="#484c63" stroke="#484c63" stroke-width="1.600"/><g fill="#fff"><rect x="102" y="13.600" width="2" height="1.800"/><rect x="105" y="13.600" width="2" height="1.800"/><rect x="108" y="13.600" width="2" height="1.800"/><rect x="111" y="13.600" width="1.500" height="1.800"/><rect x="103.500" y="16.400" width="2" height="1.800"/><rect x="106.500" y="16.400" width="2" height="1.800"/><rect x="109.500" y="16.400" width="2" height="1.800"/><rect x="102.500" y="19.200" width="9" height="1.600"/></g><circle cx="131" cy="13.200" r="3.200" fill="#484c63"/><path d="M124.500 21l1.500-3.500c1.500-1.200 8.500-1.200 10 0l1.500 3.500l-1.500 3.500h-10z" fill="#484c63"/><path d="M130.500 21.500l2 1.800l4-4" stroke="#fff" stroke-width="1.300" fill="none"/><circle cx="147.200" cy="14.400" r="3.300" fill="#484c63"/><circle cx="154.300" cy="14.400" r="3.300" fill="#484c63"/><circle cx="147.200" cy="21.400" r="3.300" fill="#484c63"/><circle cx="154.300" cy="21.400" r="3.300" fill="#484c63"/><rect x="146" y="13.200" width="9.500" height="9.500" fill="#484c63"/><path d="M150.750 11v14M144 17.900h14" stroke="#f7fafd" stroke-width="1"/><circle cx="154.800" cy="13.800" r="1.100" fill="#fff"/></svg>
<span class="t" style="left:1467px;top:848px;font-size:16px;font-weight:bold;color:#484c63">五</span>
<div class="a" style="left:0;top:869px;width:1600px;height:1px;background:#fff"></div>
<div class="a" style="left:0;top:870px;width:1600px;height:3px;background:#10222c;border-top:1px solid #06161f"></div>
<div class="a" style="left:361px;top:870px;width:160px;height:3px;background:linear-gradient(90deg,#414d56,#5b666c);border-top:1px solid #36434b"></div>
<div class="a" style="left:521px;top:870px;width:1079px;height:3px;background:#1b2127;border-top:1px solid #12171c"></div>
</body>
</html>
